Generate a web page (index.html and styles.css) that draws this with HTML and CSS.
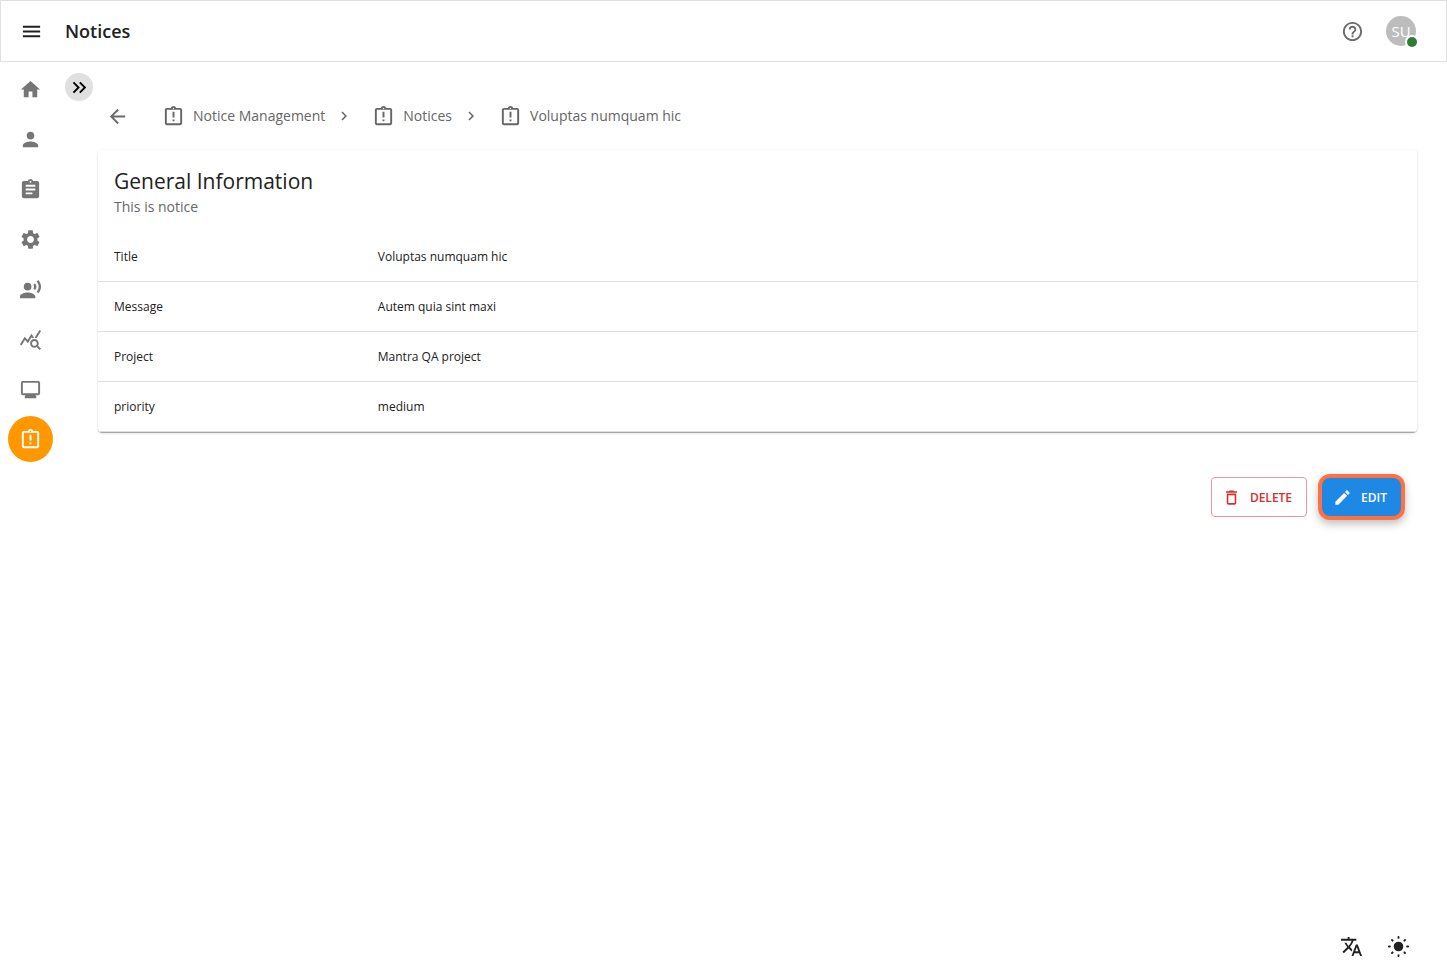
FILE: index.html
```html
<!DOCTYPE html>
<html lang="en">
<head>
  <meta charset="UTF-8" />
  <meta name="viewport" content="width=device-width, initial-scale=1.0" />
  <title>Notices</title>
  <link rel="stylesheet" href="styles.css">
</head>

<body>
  <!-- shared icon -->
  <svg class="defs" aria-hidden="true">
    <symbol id="notice" viewBox="0 0 24 24">
      <path d="M11 15h2v2h-2zm0-8h2v6h-2z"/>
      <path fill-rule="evenodd" d="M19 3h-4.18C14.4 1.84 13.3 1 12 1s-2.4.84-2.82 2H5c-1.1 0-2 .9-2 2v14c0 1.1.9 2 2 2h14c1.1 0 2-.9 2-2V5c0-1.1-.9-2-2-2zm-7-.25c.41 0 .75.34.75.75s-.34.75-.75.75-.75-.34-.75-.75.34-.75.75-.75zM19 19H5V5h14v14z"/>
    </symbol>
  </svg>

  <header class="topbar">
    <button class="icon-btn dark" aria-label="Menu">
      <svg viewBox="0 0 24 24"><path d="M3 18h18v-2H3v2zm0-5h18v-2H3v2zm0-7v2h18V6H3z"/></svg>
    </button>
    <h1>Notices</h1>
    <div class="topbar-right">
      <button class="icon-btn" aria-label="Help">
        <svg viewBox="0 0 24 24"><path d="M11 18h2v-2h-2v2zm1-16C6.48 2 2 6.48 2 12s4.48 10 10 10 10-4.48 10-10S17.52 2 12 2zm0 18c-4.41 0-8-3.59-8-8s3.59-8 8-8 8 3.59 8 8-3.59 8-8 8zm0-14c-2.21 0-4 1.79-4 4h2c0-1.1.9-2 2-2s2 .9 2 2c0 2-3 1.75-3 5h2c0-2.25 3-2.5 3-5 0-2.21-1.79-4-4-4z"/></svg>
      </button>
      <button class="avatar">SU<span class="status"></span></button>
    </div>
  </header>

  <div class="layout">
    <nav class="rail">
      <a href="#" aria-label="Home"><svg viewBox="0 0 24 24"><path d="M10 20v-6h4v6h5v-8h3L12 3 2 12h3v8z"/></svg></a>
      <a href="#" aria-label="Users"><svg viewBox="0 0 24 24"><path d="M12 12c2.21 0 4-1.79 4-4s-1.79-4-4-4-4 1.79-4 4 1.79 4 4 4zm0 2c-2.67 0-8 1.34-8 4v2h16v-2c0-2.66-5.33-4-8-4z"/></svg></a>
      <a href="#" aria-label="Assignments"><svg viewBox="0 0 24 24"><path d="M19 3h-4.18C14.4 1.84 13.3 1 12 1c-1.3 0-2.4.84-2.82 2H5c-1.1 0-2 .9-2 2v14c0 1.1.9 2 2 2h14c1.1 0 2-.9 2-2V5c0-1.1-.9-2-2-2zm-7 0c.55 0 1 .45 1 1s-.45 1-1 1-1-.45-1-1 .45-1 1-1zm2 14H7v-2h7v2zm3-4H7v-2h10v2zm0-4H7V7h10v2z"/></svg></a>
      <a href="#" aria-label="Settings"><svg viewBox="0 0 24 24"><path d="M19.14 12.94c.04-.3.06-.61.06-.94 0-.32-.02-.64-.07-.94l2.03-1.58c.18-.14.23-.41.12-.61l-1.92-3.32c-.12-.22-.37-.29-.59-.22l-2.39.96c-.5-.38-1.03-.7-1.62-.94l-.36-2.54c-.04-.24-.24-.41-.48-.41h-3.84c-.24 0-.43.17-.47.41l-.36 2.54c-.59.24-1.13.57-1.62.94l-2.39-.96c-.22-.08-.47 0-.59.22L2.74 8.87c-.12.21-.08.47.12.61l2.03 1.58c-.05.3-.09.63-.09.94s.02.64.07.94l-2.03 1.58c-.18.14-.23.41-.12.61l1.92 3.32c.12.22.37.29.59.22l2.39-.96c.5.38 1.03.7 1.62.94l.36 2.54c.05.24.24.41.48.41h3.84c.24 0 .44-.17.47-.41l.36-2.54c.59-.24 1.13-.56 1.62-.94l2.39.96c.22.08.47 0 .59-.22l1.92-3.32c.12-.22.07-.47-.12-.61l-2.01-1.58zM12 15.6c-1.98 0-3.6-1.62-3.6-3.6s1.62-3.6 3.6-3.6 3.6 1.62 3.6 3.6-1.62 3.6-3.6 3.6z"/></svg></a>
      <a href="#" aria-label="Announcements"><svg viewBox="0 0 24 24"><circle cx="9" cy="9" r="4"/><path d="M9 15c-2.67 0-8 1.34-8 4v2h16v-2c0-2.66-5.33-4-8-4zm7.76-9.64-1.68 1.69c.84 1.18.84 2.71 0 3.89l1.68 1.69c2.02-2.02 2.02-5.07 0-7.27zM20.07 2l-1.63 1.63c2.77 3.02 2.77 7.56 0 10.74L20.07 16c3.9-3.89 3.91-9.95 0-14z"/></svg></a>
      <a href="#" aria-label="Statistics"><svg viewBox="0 0 24 24"><path d="M19.88 18.47c.44-.7.7-1.51.7-2.39 0-2.49-2.01-4.5-4.5-4.5s-4.5 2.01-4.5 4.5 2.01 4.5 4.49 4.5c.88 0 1.7-.26 2.39-.7L21.58 23 23 21.58l-3.12-3.11zm-3.8.11c-1.38 0-2.5-1.12-2.5-2.5s1.12-2.5 2.5-2.5 2.5 1.12 2.5 2.5-1.12 2.5-2.5 2.5zm-.36-8.5c-.74.02-1.45.18-2.1.45l-.55-.83-3.8 6.18-3.01-3.52-3.63 5.81L1 17l5-8 3 3.5L13 6l2.72 4.08zm2.59.5c-.64-.28-1.33-.45-2.05-.49L21.38 2 23 3.18l-4.69 7.4z"/></svg></a>
      <a href="#" aria-label="Monitor"><svg viewBox="0 0 24 24"><path d="M20 3H4c-1.1 0-2 .9-2 2v11c0 1.1.9 2 2 2h3l-1 1v2h12v-2l-1-1h3c1.1 0 2-.9 2-2V5c0-1.1-.9-2-2-2zm0 13H4V5h16v11z"/></svg></a>
      <a href="#" class="active" aria-label="Notices"><svg><use href="#notice"/></svg></a>
    </nav>

    <button class="expand" aria-label="Expand menu">
      <svg viewBox="0 0 24 24"><path d="M6.41 6 5 7.41 9.58 12 5 16.59 6.41 18l6-6zM13 6l-1.41 1.41L16.17 12l-4.58 4.59L13 18l6-6z"/></svg>
    </button>

    <main>
      <nav class="breadcrumbs">
        <button class="icon-btn" aria-label="Back">
          <svg viewBox="0 0 24 24"><path d="M20 11H7.83l5.59-5.59L12 4l-8 8 8 8 1.41-1.41L7.83 13H20v-2z"/></svg>
        </button>
        <a href="#"><svg><use href="#notice"/></svg>Notice Management</a>
        <svg class="sep" viewBox="0 0 24 24"><path d="M10 6 8.59 7.41 13.17 12l-4.58 4.59L10 18l6-6z"/></svg>
        <a href="#"><svg><use href="#notice"/></svg>Notices</a>
        <svg class="sep" viewBox="0 0 24 24"><path d="M10 6 8.59 7.41 13.17 12l-4.58 4.59L10 18l6-6z"/></svg>
        <a href="#"><svg><use href="#notice"/></svg>Voluptas numquam hic</a>
      </nav>

      <section class="card">
        <div class="card-header">
          <h2>General Information</h2>
          <p>This is notice</p>
        </div>
        <table>
          <tr><th scope="row">Title</th><td>Voluptas numquam hic</td></tr>
          <tr><th scope="row">Message</th><td>Autem quia sint maxi</td></tr>
          <tr><th scope="row">Project</th><td>Mantra QA project</td></tr>
          <tr><th scope="row">priority</th><td>medium</td></tr>
        </table>
      </section>

      <div class="actions">
        <button class="btn btn-delete">
          <svg viewBox="0 0 24 24"><path d="M6 19c0 1.1.9 2 2 2h8c1.1 0 2-.9 2-2V7H6v12zM8 9h8v10H8V9zm7.5-5-1-1h-5l-1 1H5v2h14V4h-3.5z"/></svg>
          DELETE
        </button>
        <button class="btn btn-edit">
          <svg viewBox="0 0 24 24"><path d="M3 17.25V21h3.75L17.81 9.94l-3.75-3.75L3 17.25zM20.71 7.04c.39-.39.39-1.02 0-1.41l-2.34-2.34c-.39-.39-1.02-.39-1.41 0l-1.83 1.83 3.75 3.75 1.83-1.83z"/></svg>
          EDIT
        </button>
      </div>
    </main>
  </div>

  <footer class="tools">
    <button class="icon-btn dark" aria-label="Language">
      <svg viewBox="0 0 24 24"><path d="m12.87 15.07-2.54-2.51.03-.03c1.74-1.94 2.98-4.17 3.71-6.53H17V4h-7V2H8v2H1v1.99h11.17C11.5 7.92 10.44 9.75 9 11.35 8.07 10.32 7.3 9.19 6.69 8h-2c.73 1.63 1.73 3.17 2.98 4.56l-5.09 5.02L4 19l5-5 3.11 3.11.76-2.04zM18.5 10h-2L12 22h2l1.12-3h4.75L21 22h2l-4.5-12zm-2.62 7 1.62-4.33L19.12 17h-3.24z"/></svg>
    </button>
    <button class="icon-btn dark" aria-label="Light mode">
      <svg viewBox="0 0 24 24"><circle cx="12" cy="12" r="5"/><path stroke="currentColor" stroke-width="2" stroke-linecap="round" d="M12 2v1M12 21v1M2 12h1M21 12h1M5.2 5.2l.7.7M18.1 18.1l.7.7M5.2 18.8l.7-.7M18.1 5.9l.7-.7"/></svg>
    </button>
  </footer>
</body>
</html>
```
FILE: styles.css
```css
* {
  box-sizing: border-box;
}
body {
  margin: 0;
  min-height: 100vh;
  display: flex;
  flex-direction: column;
  font-family: "Segoe UI", "Open Sans", sans-serif;
  font-size: 14px;
  color: #212121;
  background: #fff;
}
h1, h2, p {
  margin: 0;
}
button {
  font-family: inherit;
  border: none;
  background: none;
  padding: 0;
  cursor: pointer;
}
a {
  color: inherit;
  text-decoration: none;
}
svg {
  display: block;
  width: 23px;
  height: 23px;
  fill: currentColor;
  flex-shrink: 0;
}
.defs {
  position: absolute;
  width: 0;
  height: 0;
}
.icon-btn {
  color: #6b6b6b;
}
.icon-btn.dark {
  color: #212121;
}

/* top bar */
.topbar {
  display: flex;
  align-items: center;
  height: 62px;
  padding: 0 30px 0 19px;
  border: 1px solid #e0e0e0;
}
.topbar h1 {
  margin-left: 22px;
  font-size: 18px;
  font-weight: 600;
  line-height: 24px;
}
.topbar-right {
  display: flex;
  align-items: center;
  gap: 22px;
  margin-left: auto;
}
.avatar {
  position: relative;
  width: 30px;
  height: 30px;
  border-radius: 50%;
  background: #bdbdbd;
  color: #fff;
  font-size: 15px;
  line-height: 30px;
}
.status {
  position: absolute;
  right: -1px;
  bottom: -1px;
  width: 10px;
  height: 10px;
  border-radius: 50%;
  background: #2e7d32;
  box-shadow: 0 0 0 2px #fff;
}

/* left rail */
.layout {
  display: flex;
  flex: 1;
  align-items: flex-start;
}
.rail {
  display: flex;
  flex-direction: column;
  gap: 4px;
  padding: 4px 8px;
}
.rail a {
  display: flex;
  align-items: center;
  justify-content: center;
  width: 45px;
  height: 46px;
  border-radius: 50%;
  color: #757575;
}
.rail a.active {
  background: #ff9800;
  color: #fff;
}
.expand {
  display: flex;
  align-items: center;
  justify-content: center;
  width: 28px;
  height: 28px;
  margin: 11px 5px 0 4px;
  border-radius: 50%;
  background: #e0e0e0;
  color: #000;
}

/* content */
main {
  flex: 1;
  padding: 42px 30px 0 0;
}
.breadcrumbs {
  display: flex;
  align-items: center;
  padding-left: 8px;
  color: #666;
}
.breadcrumbs a {
  display: flex;
  align-items: center;
  gap: 8px;
  font-size: 14px;
  line-height: 24px;
}
.breadcrumbs .icon-btn {
  margin-right: 33px;
}
.breadcrumbs .sep {
  width: 18px;
  height: 18px;
  margin: 0 19px 0 10px;
}
.card {
  margin-top: 22px;
  border-radius: 4px;
  box-shadow: 0 2px 1px -1px rgba(0,0,0,0.2), 0 1px 1px rgba(0,0,0,0.14), 0 1px 3px rgba(0,0,0,0.12);
}
.card-header {
  padding: 16px 16px 14px;
}
.card-header h2 {
  font-size: 21px;
  font-weight: 400;
  line-height: 30px;
}
.card-header p {
  color: #666;
  line-height: 22px;
}
table {
  width: 100%;
  border-spacing: 0;
  table-layout: fixed;
}
th, td {
  height: 50px;
  padding: 0 16px;
  border-bottom: 1px solid #e0e0e0;
  font-size: 12px;
  font-weight: 400;
  text-align: left;
}
th {
  width: 20%;
}
.actions {
  display: flex;
  align-items: center;
  justify-content: flex-end;
  gap: 15px;
  margin-top: 45px;
  padding-right: 16px;
}
.btn {
  display: flex;
  align-items: center;
  gap: 9px;
  font-size: 12px;
  font-weight: 600;
}
.btn svg {
  width: 19px;
  height: 19px;
}
.btn-delete {
  height: 40px;
  padding: 0 14px 0 10px;
  border: 1px solid #e99797;
  border-radius: 4px;
  color: #d32f2f;
}
.btn-edit {
  height: 38px;
  padding: 0 14px 0 11px;
  border-radius: 8px;
  background: #1e88e5;
  color: #fff;
  box-shadow: 0 0 0 4px #ff7043, 0 4px 8px 4px rgba(0,0,0,0.25);
}

/* bottom right tools */
.tools {
  display: flex;
  justify-content: flex-end;
  gap: 24px;
  padding: 0 37px 12px 0;
}
```
